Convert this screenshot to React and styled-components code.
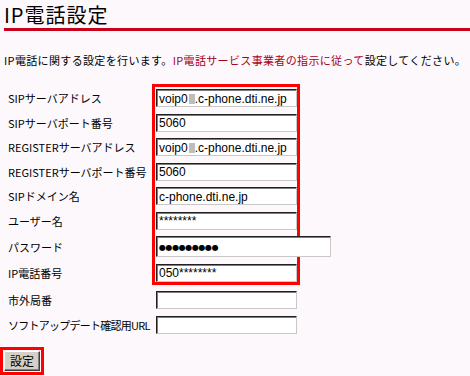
import React from 'react';
import styled, { createGlobalStyle } from 'styled-components';

const GlobalStyle = createGlobalStyle`
  body {
    margin: 0;
    background: #fcf8fc;
    font-family: "Noto Sans CJK JP", "Liberation Sans", sans-serif;
    color: #000;
  }
`;

const Page = styled.div`
  width: 470px;
  height: 376px;
  overflow: hidden;
`;

const Title = styled.h1`
  margin: 0 0 0 4px;
  padding-top: 3px;
  height: 25px;
  font-size: 20px;
  line-height: 24px;
  font-weight: normal;
  letter-spacing: 1px;
  border-bottom: 3px solid #c8001a;
`;

const Intro = styled.p`
  margin: 22px 0 0 4px;
  font-size: 11px;
  line-height: 14px;
  letter-spacing: 0.35px;
  white-space: nowrap;
`;

const Notice = styled.span`
  color: #a8001c;
`;

const FormGrid = styled.div`
  display: grid;
  grid-template-columns: 148px auto;
  row-gap: 6.5px;
  align-items: center;
  margin-top: 22px;
  padding-left: 8px;
`;

const Highlight = styled.div`
  grid-column: 2;
  grid-row: 1 / 9;
  align-self: stretch;
  justify-self: start;
  width: 148px;
  box-sizing: border-box;
  margin: -5px 0 -3px -4px;
  border: 3px solid #ff0000;
`;

const Label = styled.div`
  grid-column: 1;
  grid-row: ${p => p.$row};
  margin-top: ${p => (p.$spaced ? '3px' : '0')};
  font-size: 11px;
  line-height: 18px;
  letter-spacing: ${p => (p.$tight ? '-0.75px' : '0')};
  white-space: nowrap;
`;

const Field = styled.div`
  grid-column: 2;
  grid-row: ${p => p.$row};
  margin-top: ${p => (p.$spaced ? '3px' : '0')};
  position: relative;
  box-sizing: border-box;
  width: ${p => (p.$wide ? '175px' : '141px')};
  height: ${p => (p.$tall ? '21px' : '18px')};
  padding: 1px 0 0 2px;
  display: flex;
  align-items: center;
  background: #fff;
  border-top: 1px solid #202020;
  border-left: 1px solid #202020;
  border-right: 1px solid #c8c8c8;
  border-bottom: 1px solid #c8c8c8;
  box-shadow: inset 1px 1px 0 #7c7c7c;
  font-family: "Liberation Sans", sans-serif;
  font-size: 12px;
  white-space: nowrap;
`;

const Redact = styled.span`
  display: inline-block;
  width: 6px;
  height: 10px;
  margin: 0 0 0 1px;
  background: #bdbdbd;
`;

const Dots = styled.span`
  font-family: "DejaVu Sans", sans-serif;
  font-size: 8px;
  letter-spacing: -0.4px;
`;

const ButtonFrame = styled.div`
  display: inline-block;
  margin-top: 13px;
  padding: 1px;
  border: 3px solid #ff0000;
`;

const Button = styled.button`
  display: block;
  width: 36px;
  height: 20px;
  padding: 0;
  background: #d4d0c8;
  border-top: 1px solid #fff;
  border-left: 1px solid #fff;
  border-right: 1px solid #404040;
  border-bottom: 1px solid #404040;
  box-shadow: inset -1px -1px 0 #808080;
  font-family: "Noto Sans CJK JP", sans-serif;
  font-size: 12px;
  line-height: 16px;
  color: #000;
`;

const host = <>voip0<Redact />.c-phone.dti.ne.jp</>;

const rows = [
  { label: 'SIPサーバアドレス', value: host },
  { label: 'SIPサーバポート番号', value: '5060' },
  { label: 'REGISTERサーバアドレス', value: host },
  { label: 'REGISTERサーバポート番号', value: '5060' },
  { label: 'SIPドメイン名', value: 'c-phone.dti.ne.jp' },
  { label: 'ユーザー名', value: '********' },
  { label: 'パスワード', value: <Dots>●●●●●●●●●</Dots>, wide: true, tall: true },
  { label: 'IP電話番号', value: '050********' },
  { label: '市外局番', value: '', spaced: true },
  { label: 'ソフトアップデート確認用URL', value: '', tight: true },
];

export default function App() {
  return (
    <Page>
      <GlobalStyle />
      <Title>IP電話設定</Title>
      <Intro>
        IP電話に関する設定を行います。<Notice>IP電話サービス事業者の指示に従って</Notice>設定してください。
      </Intro>
      <FormGrid>
        <Highlight />
        {rows.map((r, i) => (
          <React.Fragment key={r.label}>
            <Label $row={i + 1} $spaced={r.spaced} $tight={r.tight}>{r.label}</Label>
            <Field $row={i + 1} $spaced={r.spaced} $wide={r.wide} $tall={r.tall}>
              {r.value}
            </Field>
          </React.Fragment>
        ))}
      </FormGrid>
      <ButtonFrame>
        <Button>設定</Button>
      </ButtonFrame>
    </Page>
  );
}
